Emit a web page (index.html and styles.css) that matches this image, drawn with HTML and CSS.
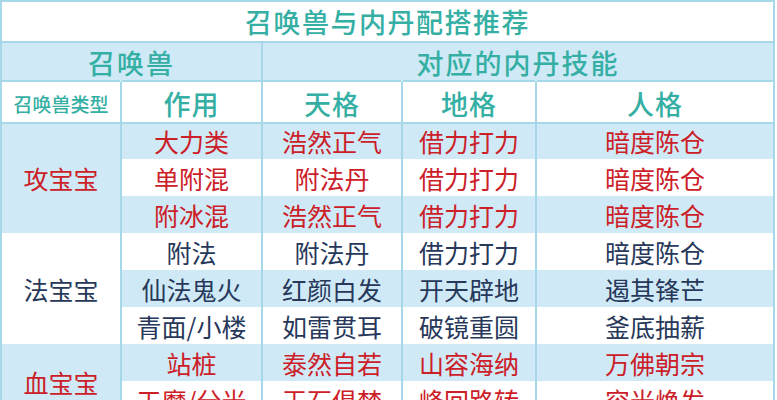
FILE: index.html
```html
<!DOCTYPE html>
<html lang="zh-CN">
<head>
<meta charset="utf-8">
<title>召唤兽与内丹配搭推荐</title>
<link rel="stylesheet" href="styles.css">
</head>
<body>
<div class="sheet">
  <div class="cell title">召唤兽与内丹配搭推荐</div>

  <div class="cell group-head span-left">召唤兽</div>
  <div class="cell group-head span-right">对应的内丹技能</div>

  <div class="cell col-head small">召唤兽类型</div>
  <div class="cell col-head">作用</div>
  <div class="cell col-head">天格</div>
  <div class="cell col-head">地格</div>
  <div class="cell col-head">人格</div>

  <div class="cell type blue red span3">攻宝宝</div>
  <div class="cell blue red">大力类</div>
  <div class="cell blue red">浩然正气</div>
  <div class="cell blue red">借力打力</div>
  <div class="cell blue red">暗度陈仓</div>

  <div class="cell red">单附混</div>
  <div class="cell red">附法丹</div>
  <div class="cell red">借力打力</div>
  <div class="cell red">暗度陈仓</div>

  <div class="cell blue red">附冰混</div>
  <div class="cell blue red">浩然正气</div>
  <div class="cell blue red">借力打力</div>
  <div class="cell blue red">暗度陈仓</div>

  <div class="cell type dark span3">法宝宝</div>
  <div class="cell dark">附法</div>
  <div class="cell dark">附法丹</div>
  <div class="cell dark">借力打力</div>
  <div class="cell dark">暗度陈仓</div>

  <div class="cell blue dark">仙法鬼火</div>
  <div class="cell blue dark">红颜白发</div>
  <div class="cell blue dark">开天辟地</div>
  <div class="cell blue dark">遏其锋芒</div>

  <div class="cell dark">青面/小楼</div>
  <div class="cell dark">如雷贯耳</div>
  <div class="cell dark">破镜重圆</div>
  <div class="cell dark">釜底抽薪</div>

  <div class="cell type blue red span2">血宝宝</div>
  <div class="cell blue red">站桩</div>
  <div class="cell blue red">泰然自若</div>
  <div class="cell blue red">山容海纳</div>
  <div class="cell blue red">万佛朝宗</div>

  <div class="cell red">天魔/分光</div>
  <div class="cell red">玉石俱焚</div>
  <div class="cell red">峰回路转</div>
  <div class="cell red">容光焕发</div>
</div>
</body>
</html>
```

FILE: styles.css
```css
html, body {
  margin: 0;
  padding: 0;
  background: #ffffff;
  overflow: hidden;
}

.sheet {
  width: 771px;
  display: grid;
  grid-template-columns: 118px 139px 138px 132px 236px;
  grid-template-rows: 39px 41px 40px repeat(8, 37px);
  column-gap: 2px;
  background: #a6d8ea;
  border: 2px solid #a6d8ea;
  border-bottom: none;
  font-family: "Noto Sans CJK SC", "Noto Sans", sans-serif;
}

.cell {
  background: #ffffff;
  display: flex;
  align-items: center;
  justify-content: center;
  font-size: 25px;
  line-height: 1;
  white-space: nowrap;
  padding-top: 2px;
}

.title {
  grid-column: 1 / -1;
  color: #35afa4;
  font-size: 27px;
  font-weight: 500;
  letter-spacing: 1.5px;
  box-shadow: 0 2px 0 #a6d8ea;
  position: relative;
  z-index: 1;
  padding-top: 0;
}

.group-head {
  background: #cfeaf6;
  color: #35afa4;
  font-size: 27px;
  font-weight: 500;
  letter-spacing: 2px;
}

.span-left { grid-column: 1 / 3; }
.span-right { grid-column: 3 / 6; }

.col-head {
  color: #35afa4;
  font-size: 27px;
  font-weight: 500;
  letter-spacing: 1px;
  box-shadow: 0 -2px 0 #a6d8ea, 0 2px 0 #a6d8ea;
  position: relative;
  z-index: 1;
}

.col-head.small {
  font-size: 19px;
  letter-spacing: 0;
}

.blue { background: #cfeaf6; }
.red { color: #cc2029; }
.dark { color: #27385a; }

.type { font-size: 25px; }
.span3 { grid-row: span 3; }
.span2 { grid-row: span 2; }
```
